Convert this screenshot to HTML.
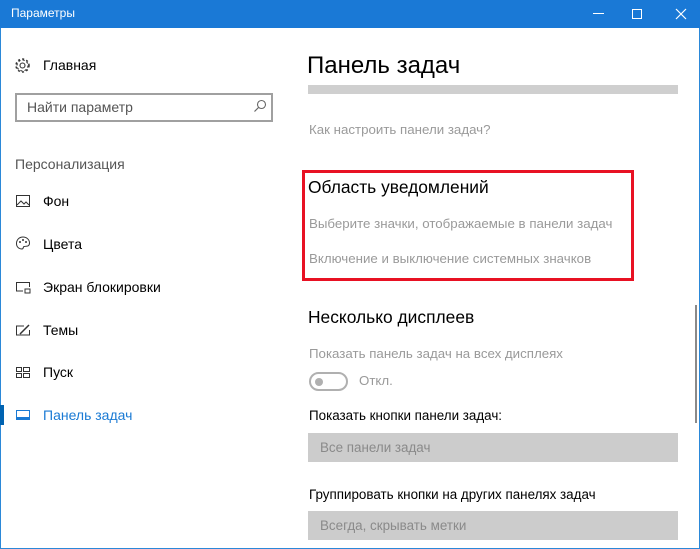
<!DOCTYPE html>
<html><head><meta charset="utf-8"><style>
*{margin:0;padding:0;box-sizing:border-box}
body{width:700px;height:549px;background:#fff;font-family:"Segoe UI","Liberation Sans","DejaVu Sans",sans-serif;position:relative;overflow:hidden;color:#000}
.a{position:absolute;white-space:nowrap}
.t{background:#1a79d6;height:28px;left:0;top:0;width:700px}
.frame{border:1px solid #2b88d8;border-top:none;left:0;top:28px;width:700px;height:521px}
.nav{font-size:14px;left:43px}
.ic{left:15px;width:16px;height:16px}
.g{color:#9a9a9a;font-size:13.3px;left:309px}
.dd{background:#cccccc;left:308px;width:370px;height:29px;color:#8a8a8a;font-size:13.4px;padding:7px 12px}
</style></head><body>
<div class="a t"></div>
<div class="a" style="left:11px;top:6px;color:#fff;font-size:12px">Параметры</div>
<div class="a" style="left:593px;top:13px;width:11px;height:1px;background:#fff"></div>
<div class="a" style="left:632px;top:9px;width:10px;height:10px;border:1px solid #fff"></div>
<svg class="a" style="left:675px;top:8px" width="12" height="12"><path d="M1 1L11 11M11 1L1 11" stroke="#fff" stroke-width="1.2"/></svg>
<div class="a frame"></div>

<svg class="a" style="left:14px;top:57px" width="17" height="17" viewBox="0 0 17 17"><circle cx="8.5" cy="8.5" r="2.5" fill="none" stroke="#333" stroke-width="1.1"/><circle cx="8.5" cy="8.5" r="5.5" fill="none" stroke="#333" stroke-width="1.1" stroke-dasharray="2.2 2.1"/><circle cx="8.5" cy="8.5" r="6.5" fill="none" stroke="#333" stroke-width="1.5" stroke-dasharray="2 2.3"/></svg>
<div class="a nav" style="top:57px">Главная</div>
<div class="a" style="left:15px;top:93px;width:258px;height:29px;border:2px solid #a0a0a0"></div>
<div class="a" style="left:27px;top:99px;font-size:14px;color:#555">Найти параметр</div>
<svg class="a" style="left:253px;top:99px" width="14" height="14"><circle cx="8.5" cy="5.5" r="4" fill="none" stroke="#666" stroke-width="1.1"/><path d="M5.5 8.5L1.5 12.5" stroke="#666" stroke-width="1.2"/></svg>
<div class="a" style="left:15px;top:156px;font-size:14px;color:#555">Персонализация</div>

<svg class="a ic" style="top:193px"><rect x="1.5" y="2.5" width="13" height="11" fill="none" stroke="#333"/><path d="M2 12L6 8L9 11L11 9L14 12" fill="none" stroke="#333"/></svg>
<div class="a nav" style="top:193px">Фон</div>
<svg class="a ic" style="top:235px"><path d="M8 2C4 2 1.5 5 1.5 8.5C1.5 12 4 14 7 14C8.5 14 8 12 9 11.5C11 11 14.5 12 14.5 8C14.5 4.5 11.5 2 8 2Z" fill="none" stroke="#333"/><circle cx="5" cy="7" r="1" fill="#333"/><circle cx="8" cy="5" r="1" fill="#333"/><circle cx="11" cy="7" r="1" fill="#333"/></svg>
<div class="a nav" style="top:236px">Цвета</div>
<svg class="a ic" style="top:279px"><path d="M8 12H1.5V3.5H14.5V8" fill="none" stroke="#333"/><rect x="10" y="10" width="5" height="4" fill="none" stroke="#333"/></svg>
<div class="a nav" style="top:279px">Экран блокировки</div>
<svg class="a ic" style="top:322px"><path d="M9 4H1.5V13H14.5V8" fill="none" stroke="#333"/><path d="M5 12L14 3" stroke="#333" stroke-width="1.5"/></svg>
<div class="a nav" style="top:322px">Темы</div>
<svg class="a ic" style="top:364px"><rect x="1.5" y="3.5" width="5" height="4" fill="none" stroke="#333"/><rect x="8.5" y="3.5" width="6" height="4" fill="none" stroke="#333"/><rect x="1.5" y="9.5" width="5" height="4" fill="none" stroke="#333"/><rect x="8.5" y="9.5" width="6" height="4" fill="none" stroke="#333"/></svg>
<div class="a nav" style="top:364px">Пуск</div>
<div class="a" style="left:0;top:405px;width:4px;height:20px;background:#0063b1"></div>
<svg class="a ic" style="top:407px"><rect x="1.5" y="3.5" width="13" height="9" fill="none" stroke="#1a7ad4"/><rect x="2" y="10" width="12" height="2" fill="#1a7ad4"/></svg>
<div class="a nav" style="top:407px;color:#1a7ad4">Панель задач</div>

<div class="a" style="left:307px;top:52px;font-size:24px;font-weight:300">Панель задач</div>
<div class="a" style="left:308px;top:85px;width:370px;height:9px;background:#cfcfcf"></div>
<div class="a g" style="top:122px">Как настроить панели задач?</div>
<div class="a" style="left:302px;top:170px;width:332px;height:111px;border:3px solid #e81123"></div>
<div class="a" style="left:308px;top:177px;font-size:17.4px">Область уведомлений</div>
<div class="a g" style="top:216px">Выберите значки, отображаемые в панели задач</div>
<div class="a g" style="top:251px">Включение и выключение системных значков</div>
<div class="a" style="left:308px;top:307px;font-size:17.4px">Несколько дисплеев</div>
<div class="a g" style="top:346px">Показать панель задач на всех дисплеях</div>
<div class="a" style="left:309px;top:372px;width:39px;height:19px;border:2px solid #b0b0b0;border-radius:10px"></div>
<div class="a" style="left:315px;top:378px;width:8px;height:8px;border-radius:50%;background:#b0b0b0"></div>
<div class="a g" style="left:359px;top:373px">Откл.</div>
<div class="a" style="left:309px;top:408px;font-size:13.4px">Показать кнопки панели задач:</div>
<div class="a dd" style="top:433px">Все панели задач</div>
<div class="a" style="left:309px;top:487px;font-size:13.4px">Группировать кнопки на других панелях задач</div>
<div class="a dd" style="top:511px">Всегда, скрывать метки</div>
<div class="a" style="left:695px;top:305px;width:2px;height:118px;background:#8a8a8a"></div>
</body></html>
